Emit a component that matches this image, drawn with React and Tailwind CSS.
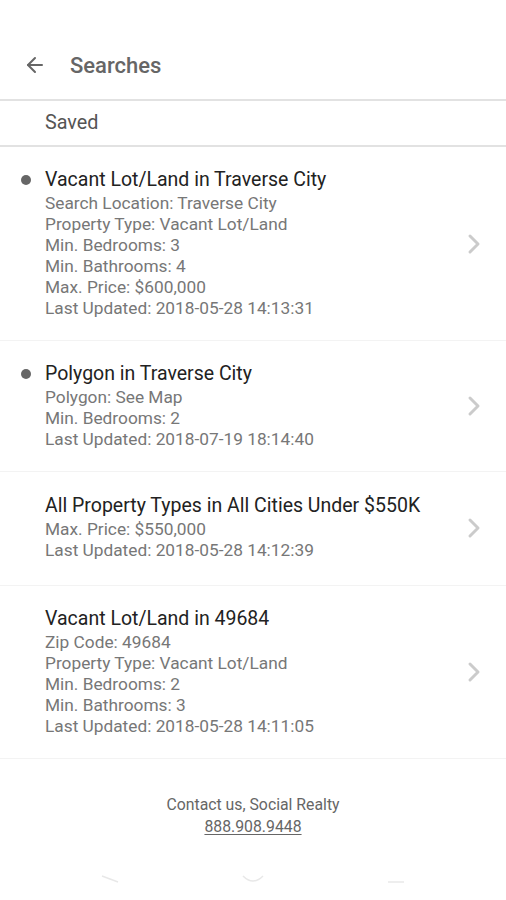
import { ArrowLeft } from 'lucide-react';

const searches = [
  {
    title: 'Vacant Lot/Land in Traverse City',
    dot: true,
    lines: [
      'Search Location: Traverse City',
      'Property Type: Vacant Lot/Land',
      'Min. Bedrooms: 3',
      'Min. Bathrooms: 4',
      'Max. Price: $600,000',
      'Last Updated: 2018-05-28 14:13:31',
    ],
  },
  {
    title: 'Polygon in Traverse City',
    dot: true,
    lines: ['Polygon: See Map', 'Min. Bedrooms: 2', 'Last Updated: 2018-07-19 18:14:40'],
  },
  {
    title: 'All Property Types in All Cities Under $550K',
    dot: false,
    tall: true,
    lines: ['Max. Price: $550,000', 'Last Updated: 2018-05-28 14:12:39'],
  },
  {
    title: 'Vacant Lot/Land in 49684',
    dot: false,
    lines: [
      'Zip Code: 49684',
      'Property Type: Vacant Lot/Land',
      'Min. Bedrooms: 2',
      'Min. Bathrooms: 3',
      'Last Updated: 2018-05-28 14:11:05',
    ],
  },
];

// Chevron on the right of each row
const Chevron = () => (
  <svg width="16" height="22" viewBox="0 0 16 22" fill="none">
    <path d="M4 3l8 8-8 8" stroke="#cbcbcb" strokeWidth="3" strokeLinecap="round" strokeLinejoin="round" />
  </svg>
);

const SearchRow = ({ title, dot, lines, tall }) => (
  <div
    className={`flex items-center border-b border-[#f3f3f3] pr-[24px] ${
      tall ? 'pt-[22px] pb-[24px]' : 'py-[21px]'
    }`}
  >
    <div className="w-[45px] shrink-0 self-start flex justify-center pt-[7px] pl-[7px]">
      {dot && <span className="block w-[10px] h-[10px] rounded-full bg-[#666666]" />}
    </div>
    <div className="flex-1 min-w-0">
      <div className="text-[19.5px] leading-[24px] text-[#222222] mb-[1px] whitespace-nowrap">{title}</div>
      {lines.map((line, i) => (
        <div key={i} className="text-[17.3px] leading-[21px] text-[#777777] whitespace-nowrap">
          {line}
        </div>
      ))}
    </div>
    <Chevron />
  </div>
);

export default function App() {
  return (
    <div className="w-[506px] h-[900px] bg-white overflow-hidden flex flex-col font-['Roboto','Liberation_Sans',sans-serif]">
      {/* Header */}
      <div className="flex items-center h-[101px] pt-[31px] border-b-2 border-[#e2e2e2]">
        <div className="w-[70px] flex justify-center pr-[1px]">
          <ArrowLeft className="w-[24px] h-[24px] text-[#666666]" strokeWidth={2} />
        </div>
        <h1 className="text-[22px] font-medium text-[#666666]">Searches</h1>
      </div>

      {/* Tab */}
      <div className="h-[46px] flex items-center pl-[45px] border-b-2 border-[#e2e2e2]">
        <span className="text-[19.8px] text-[#555555]">Saved</span>
      </div>

      {/* Saved searches */}
      <div className="flex flex-col">
        {searches.map((s, i) => (
          <SearchRow key={i} {...s} />
        ))}
      </div>

      {/* Footer */}
      <div className="flex flex-col items-center pt-[35px] text-[15.8px] leading-[22px] text-[#666666]">
        <div>Contact us, Social Realty</div>
        <div className="underline underline-offset-2">888.908.9448</div>
      </div>

      {/* faint nav hints */}
      <div className="flex justify-between px-[100px] mt-[36px]">
        <svg width="20" height="10" viewBox="0 0 20 10">
          <path d="M2 2l16 6" stroke="#e8e8e8" strokeWidth="1.5" />
        </svg>
        <svg width="24" height="10" viewBox="0 0 24 10">
          <path d="M2 2q10 10 20 0" stroke="#e8e8e8" strokeWidth="1.5" fill="none" />
        </svg>
        <svg width="20" height="10" viewBox="0 0 20 10">
          <path d="M2 8h16" stroke="#e8e8e8" strokeWidth="1.5" />
        </svg>
      </div>
    </div>
  );
}
